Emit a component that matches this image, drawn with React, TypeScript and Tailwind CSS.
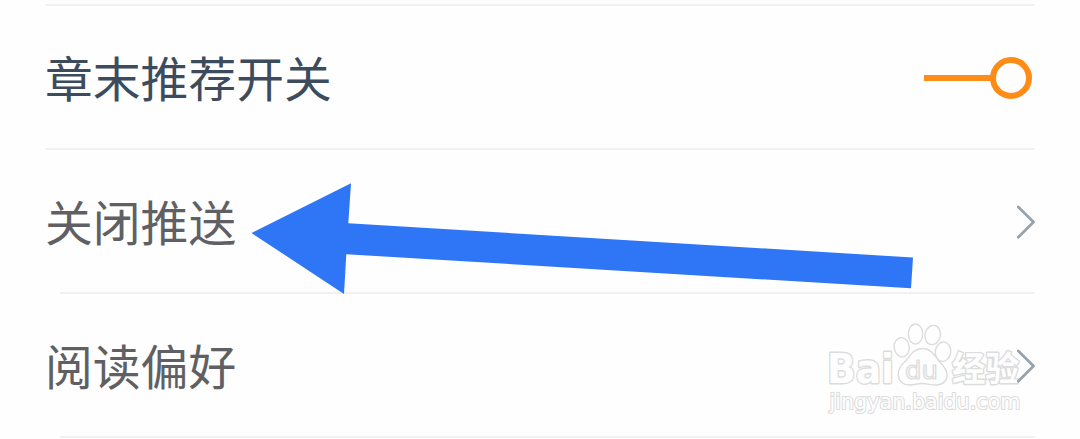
import React from 'react';

interface SettingRowProps {
  label: string;
  labelClass: string;
  dividerClass: string;
  children: React.ReactNode;
}

const SettingRow: React.FC<SettingRowProps> = ({ label, labelClass, dividerClass, children }) => {
  return (
    <div className="h-36">
      <div className="flex h-[142px] items-center justify-between">
        <span className={labelClass}>{label}</span>
        {children}
      </div>
      <div className={dividerClass} />
    </div>
  );
};

const Toggle: React.FC = () => (
  <div className="mt-px mr-[3px] flex items-center">
    <div className="h-1.5 w-[67px] bg-[#ff8c17]" />
    <div className="-ml-px h-[42px] w-[42px] rounded-full border-[6px] border-[#ff8c17]" />
  </div>
);

const Chevron: React.FC = () => (
  <svg className="z-10 mt-0.5 h-9 w-5" viewBox="0 0 20 36" fill="none" stroke="#98a2ab" strokeWidth="2.7" strokeLinecap="round">
    <path d="M3.3 3L18.5 18L3.3 33.3" />
  </svg>
);

const Arrow: React.FC = () => (
  <svg className="pointer-events-none absolute top-[180px] left-[248px]" width="670" height="118" viewBox="248 180 670 118">
    <path d="M251.5 233L351 183.3L348.3 223.2L913 257.5L911 288.3L346.3 254.2L344 294Z" fill="#2f76f6" />
  </svg>
);

const Watermark: React.FC = () => (
  <svg
    className="pointer-events-none absolute top-[318px] left-[820px]"
    width="230"
    height="116"
    viewBox="820 318 230 116"
    fill="#fefefe"
    stroke="#dcdcdc"
    strokeWidth="1.4"
    strokeLinejoin="round"
  >
    <g fontWeight="700" paintOrder="stroke" strokeWidth="2.8">
      <text x="827" y="383" fontSize="41" textLength="67" lengthAdjust="spacingAndGlyphs" fontFamily="'DejaVu Sans', sans-serif">Bai</text>
      <text x="952" y="380.5" fontSize="34" textLength="67" lengthAdjust="spacingAndGlyphs" fontFamily="'Noto Sans CJK SC', sans-serif">经验</text>
    </g>
    {/* Paw */}
    <ellipse cx="901.7" cy="347.3" rx="7.5" ry="9.7" transform="rotate(-8 901.7 347.3)" />
    <ellipse cx="915.5" cy="334" rx="7.2" ry="10" />
    <ellipse cx="932.7" cy="335" rx="7.7" ry="9.7" transform="rotate(12 932.7 335)" />
    <ellipse cx="943" cy="351.7" rx="7.7" ry="9.7" transform="rotate(8 943 351.7)" />
    <path d="M922.5 348.5C914 348.5 911 354.5 906 360.5C901 365 897.8 369 898.2 375C898.6 381 903 385 909 385C914 385 917 383.5 922 383.5C928 383.5 932 385.5 937.5 385C944 384.5 947.5 380 947 374C946.5 368 942 365 938.5 360.5C934 354.5 930.5 348.5 922.5 348.5Z" />
    <text x="905" y="379" fontSize="24" fontFamily="'DejaVu Sans', sans-serif" textLength="33" lengthAdjust="spacingAndGlyphs" strokeWidth="1.2">du</text>
    <text x="829.5" y="409" fontSize="22" fontFamily="'DejaVu Sans', sans-serif" textLength="191" lengthAdjust="spacingAndGlyphs" paintOrder="stroke" strokeWidth="2.2">jingyan.baidu.com</text>
  </svg>
);

const labelBase = "font-['Noto_Sans_CJK_SC',sans-serif] text-[47.8px] leading-none";

const App: React.FC = () => {
  return (
    <div className="relative h-[439px] w-[1080px] overflow-hidden bg-[#fefefe] pt-1 pr-[45px] pl-[45px]">
      <div className="h-0.5 bg-[#f1f1f1]" />
      <SettingRow
        label="章末推荐开关"
        labelClass={`${labelBase} -mt-px text-[#3d4c5d]`}
        dividerClass="h-0.5 bg-[#f1f1f1]"
      >
        <Toggle />
      </SettingRow>
      <SettingRow
        label="关闭推送"
        labelClass={`${labelBase} -mt-px text-[#606064]`}
        dividerClass="ml-[15px] h-0.5 bg-[#f1f1f1]"
      >
        <Chevron />
      </SettingRow>
      <SettingRow
        label="阅读偏好"
        labelClass={`${labelBase} -mt-px text-[#606064]`}
        dividerClass="ml-[15px] h-0.5 bg-[#f1f1f1]"
      >
        <Chevron />
      </SettingRow>
      <Arrow />
      <Watermark />
    </div>
  );
};

export default App;
